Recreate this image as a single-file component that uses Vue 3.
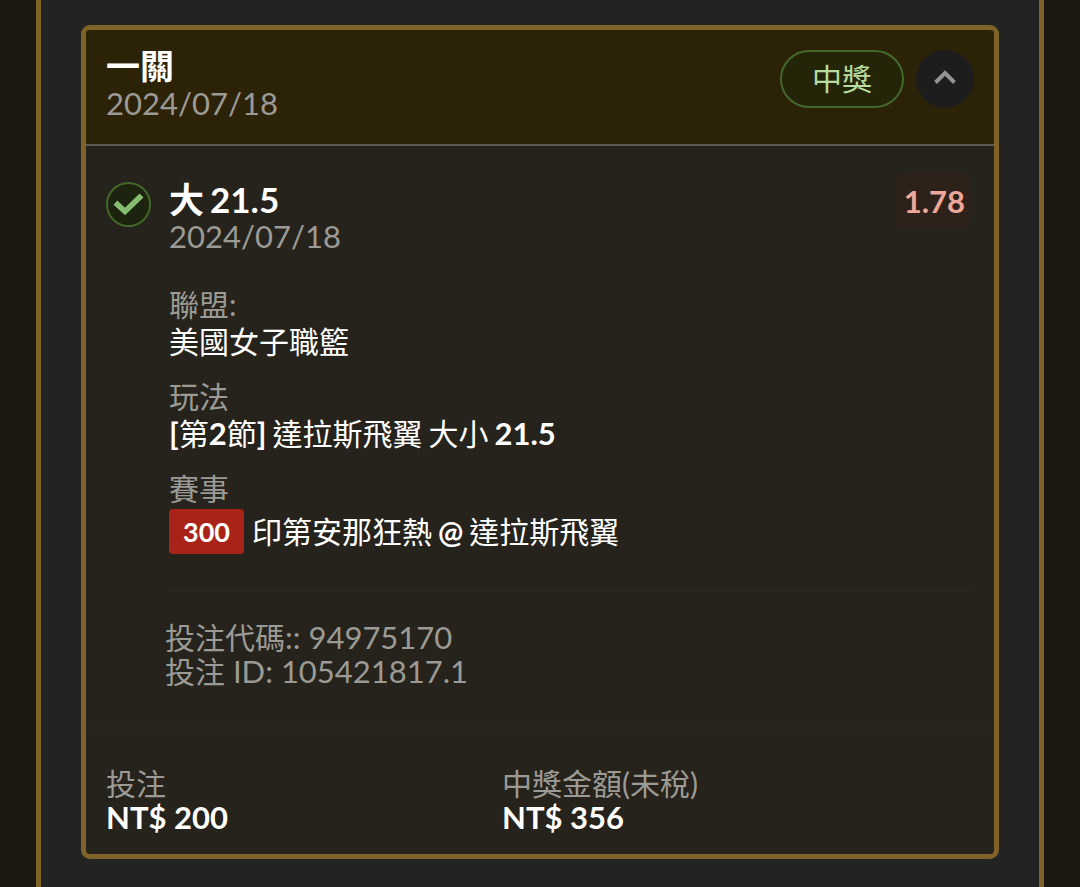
<script setup>
import { ref } from 'vue'

const open = ref(true)
</script>

<template>
  <main class="page">
    <section class="panel">
      <article class="card">
        <header class="card-head">
          <div>
            <h2 class="title">一關</h2>
            <p class="muted date">2024/07/18</p>
          </div>
          <div class="actions">
            <span class="status">中獎</span>
            <button class="toggle" type="button" :aria-expanded="open" aria-label="收合" @click="open = !open">
              <svg viewBox="0 0 58 58" aria-hidden="true">
                <path d="M19.5 32.5 L29 23 L38.5 32.5" fill="none" stroke="#949494" stroke-width="4" />
              </svg>
            </button>
          </div>
        </header>

        <div v-if="open" class="bet">
          <svg class="check" viewBox="0 0 46 46" aria-hidden="true">
            <circle cx="22.5" cy="23.5" r="21.5" fill="#1c230f" stroke="#41682a" stroke-width="2" />
            <path d="M11.5 23.5 L19 30.5 L33.5 16.5" fill="none" stroke="#86bd70" stroke-width="5.6" stroke-linecap="square" stroke-linejoin="miter" />
          </svg>
          <div class="bet-body">
            <div class="bet-top">
              <div>
                <h3 class="title pick"><span>大</span><span>21.5</span></h3>
                <p class="muted date">2024/07/18</p>
              </div>
              <span class="odds">1.78</span>
            </div>
            <dl class="facts">
              <div>
                <dt>聯盟:</dt>
                <dd>美國女子職籃</dd>
              </div>
              <div>
                <dt>玩法</dt>
                <dd class="parts">
                  <span><b>[</b>第<b>2</b>節<b>]</b></span>
                  <span>達拉斯飛翼</span>
                  <span>大小</span>
                  <b>21.5</b>
                </dd>
              </div>
              <div>
                <dt>賽事</dt>
                <dd class="match">
                  <span class="code">300</span>
                  <span class="parts"><span>印第安那狂熱</span><b class="at">@</b><span>達拉斯飛翼</span></span>
                </dd>
              </div>
            </dl>
            <div class="ids muted">
              <p>投注代碼<span class="latin">:: 94975170</span></p>
              <p>投注<span class="latin"> ID: 105421817.1</span></p>
            </div>
          </div>
        </div>

        <footer class="card-foot">
          <div>
            <p class="muted">投注</p>
            <p class="amount">NT$ 200</p>
          </div>
          <div>
            <p class="muted">中獎金額(未稅)</p>
            <p class="amount">NT$ 356</p>
          </div>
        </footer>
      </article>
    </section>
  </main>
</template>

<style>
body {
  margin: 0;
  background: #1b1812;
}
</style>

<style scoped>
.page {
  box-sizing: border-box;
  min-height: 100vh;
  padding: 0 36px;
  display: flex;
  background: #1b1812;
  color: #fff;
  font-family: Lato, "Noto Sans CJK TC", sans-serif;
  font-size: 30px;
  line-height: 34px;
}
.panel {
  flex: 1;
  padding: 25px 40px 28px;
  background: #232323;
  border: solid #7f6228;
  border-width: 0 5px;
}
h2, h3, p, dl, dd {
  margin: 0;
}
.card {
  border: 5px solid #7f6228;
  border-radius: 9px;
  background: #25231c;
  overflow: hidden;
}
.card-head {
  display: flex;
  justify-content: space-between;
  align-items: flex-start;
  padding: 17px 20px 22px;
  background: #2b2208;
  border-bottom: 2px solid #5d5a50;
}
.title {
  font-size: 34px;
  font-weight: 700;
  line-height: 37px;
}
.muted {
  color: #9c9a95;
}
.date {
  font-size: 31px;
  line-height: 38px;
}
.latin {
  font-size: 31px;
  line-height: 1;
}
.actions {
  display: flex;
  gap: 12px;
  padding-top: 3px;
}
.status {
  box-sizing: border-box;
  height: 58px;
  padding: 0 30px;
  border: 2px solid #42692a;
  border-radius: 29px;
  background: #242408;
  color: #b7dc9f;
  line-height: 52px;
}
.toggle {
  width: 58px;
  height: 58px;
  padding: 0;
  border: 0;
  border-radius: 50%;
  background: #1d1d1e;
  cursor: pointer;
}
.toggle svg {
  display: block;
}
.bet {
  display: flex;
  gap: 17px;
  padding: 35px 24px 39px 20px;
}
.check {
  flex: none;
  width: 46px;
  height: 46px;
}
.bet-body {
  flex: 1;
}
.bet-top {
  display: flex;
  justify-content: space-between;
  align-items: flex-start;
}
.pick {
  display: flex;
  gap: 6px;
  font-size: 35px;
  line-height: 36px;
}
.odds {
  padding: 0 5px 0 8px;
  margin-top: -7px;
  border-radius: 4px;
  background: #2d211a;
  color: #eda79b;
  font-size: 31px;
  font-weight: 700;
  line-height: 54px;
}
.facts {
  display: grid;
  gap: 18px;
  padding: 31px 0 36px;
}
.facts dt {
  color: #9c9a95;
  line-height: 37px;
}
.facts dd {
  line-height: 37px;
}
.facts b {
  font-size: 31px;
  font-weight: 700;
  line-height: 1;
}
.parts {
  display: flex;
  align-items: baseline;
  gap: 6px;
}
.facts .match {
  display: flex;
  align-items: center;
  gap: 8px;
  margin-top: 2px;
  line-height: 45px;
}
.facts .at {
  font-size: 30px;
}
.code {
  padding: 0 14px;
  border-radius: 4px;
  background: #a92318;
  font-size: 27px;
  font-weight: 700;
}
.ids {
  padding-top: 28px;
  border-top: 2px solid #292720;
}
.ids p {
  margin-left: -4px;
}
.card-foot {
  display: grid;
  grid-template-columns: 396px 1fr;
  padding: 37px 20px 20px;
  border-top: 2px solid #2a2820;
}
.amount {
  font-size: 31px;
  font-weight: 700;
}
</style>
